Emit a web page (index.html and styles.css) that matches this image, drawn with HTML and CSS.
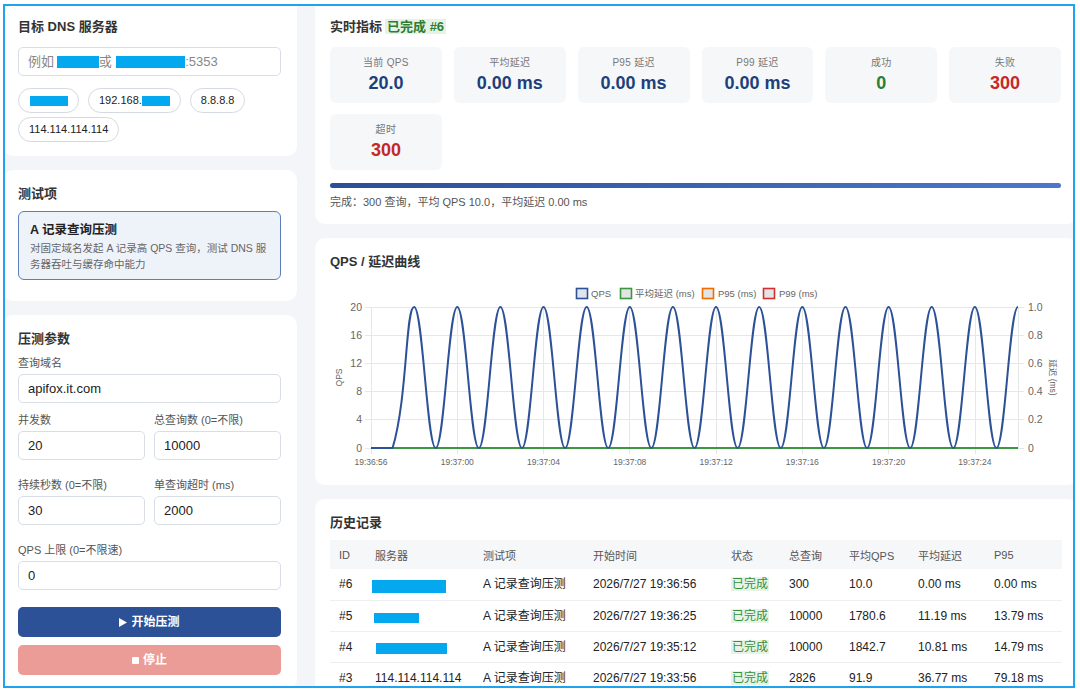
FILE: index.html
```html
<!DOCTYPE html>
<html lang="zh-CN">
<head>
<meta charset="utf-8">
<title>DNS 压测</title>
<link rel="stylesheet" href="styles.css">
</head>
<body>
<div class="frame">
  <div class="page">
    <div class="col">
      <section class="card first">
        <div class="card-title mb12">目标 DNS 服务器</div>
        <div class="input ph">例如 <span class="redact r-ph1"></span>或 <span class="redact r-ph2"></span>:5353</div>
        <div class="chips">
          <span class="chip"><span class="redact r-c1"></span></span>
          <span class="chip">192.168.<span class="redact r-c2"></span></span>
          <span class="chip">8.8.8.8</span>
          <span class="chip">114.114.114.114</span>
        </div>
      </section>

      <section class="card card-tests">
        <div class="card-title">测试项</div>
        <div class="test-item">
          <div class="ti-title">A 记录查询压测</div>
          <div class="ti-desc">对固定域名发起 A 记录高 QPS 查询，测试 DNS 服<br>务器吞吐与缓存命中能力</div>
        </div>
      </section>

      <section class="card">
        <div class="card-title">压测参数</div>
        <div class="field f-first">
          <div class="label">查询域名</div>
          <div class="input">apifox.it.com</div>
        </div>
        <div class="row2 f-gap10">
          <div class="field">
            <div class="label">并发数</div>
            <div class="input">20</div>
          </div>
          <div class="field">
            <div class="label">总查询数 (0=不限)</div>
            <div class="input">10000</div>
          </div>
        </div>
        <div class="row2 f-gap18">
          <div class="field">
            <div class="label">持续秒数 (0=不限)</div>
            <div class="input">30</div>
          </div>
          <div class="field">
            <div class="label">单查询超时 (ms)</div>
            <div class="input">2000</div>
          </div>
        </div>
        <div class="field f-gap18b">
          <div class="label lbl-tight">QPS 上限 (0=不限速)</div>
          <div class="input">0</div>
        </div>
        <div class="btn btn-start"><svg class="ico" width="8" height="9" viewBox="0 0 8 9"><path d="M0 0L8 4.5L0 9Z" fill="#fff"/></svg><span>开始压测</span></div>
        <div class="btn btn-stop"><svg class="ico" width="7" height="7" viewBox="0 0 7 7"><rect x="0" y="0" width="7" height="7" rx="1" fill="#fff"/></svg><span>停止</span></div>
      </section>
    </div>

    <div class="col">
      <section class="card first metrics-card">
        <div class="card-title mb12">实时指标<span class="badge">已完成 #6</span></div>
        <div class="metrics">
          <div class="metric"><div class="m-label">当前 QPS</div><div class="m-value">20.0</div></div>
          <div class="metric"><div class="m-label">平均延迟</div><div class="m-value">0.00 ms</div></div>
          <div class="metric"><div class="m-label">P95 延迟</div><div class="m-value">0.00 ms</div></div>
          <div class="metric"><div class="m-label">P99 延迟</div><div class="m-value">0.00 ms</div></div>
          <div class="metric"><div class="m-label">成功</div><div class="m-value ok">0</div></div>
          <div class="metric"><div class="m-label">失败</div><div class="m-value bad">300</div></div>
          <div class="metric"><div class="m-label">超时</div><div class="m-value bad">300</div></div>
        </div>
        <div class="progress"></div>
        <div class="done-text">完成：300 查询，平均 QPS 10.0，平均延迟 0.00 ms</div>
      </section>

      <section class="card chart-card">
        <div class="card-title">QPS / 延迟曲线</div>
        <svg class="chart" width="732" height="190" viewBox="0 0 732 190">
          <g class="legend">
            <rect x="246.5" y="5.5" width="11" height="10" fill="#dfe5ee" stroke="#2c5197" stroke-width="1.6"/>
            <text x="261" y="14">QPS</text>
            <rect x="290.5" y="5.5" width="11" height="10" fill="#e2e4e6" stroke="#3c963f" stroke-width="1.6"/>
            <text x="305" y="14">平均延迟 (ms)</text>
            <rect x="372.5" y="5.5" width="11" height="10" fill="#e2e4e6" stroke="#ef6c00" stroke-width="1.6"/>
            <text x="388" y="14">P95 (ms)</text>
            <rect x="433.5" y="5.5" width="11" height="10" fill="#e2e4e6" stroke="#d32f2f" stroke-width="1.6"/>
            <text x="449" y="14">P99 (ms)</text>
          </g>
          <g class="grid" stroke="#e6e7e9" stroke-width="1">
            <line x1="35" y1="24.5" x2="694" y2="24.5"/>
            <line x1="35" y1="52.5" x2="694" y2="52.5"/>
            <line x1="35" y1="80.5" x2="694" y2="80.5"/>
            <line x1="35" y1="108.5" x2="694" y2="108.5"/>
            <line x1="35" y1="136.5" x2="694" y2="136.5"/>
            <line x1="35" y1="165.5" x2="694" y2="165.5"/>
            <line x1="41.5" y1="24" x2="41.5" y2="171"/>
            <line x1="127.5" y1="24" x2="127.5" y2="171"/>
            <line x1="213.5" y1="24" x2="213.5" y2="171"/>
            <line x1="299.5" y1="24" x2="299.5" y2="171"/>
            <line x1="386.5" y1="24" x2="386.5" y2="171"/>
            <line x1="472.5" y1="24" x2="472.5" y2="171"/>
            <line x1="558.5" y1="24" x2="558.5" y2="171"/>
            <line x1="645.5" y1="24" x2="645.5" y2="171"/>
            <line x1="688.5" y1="24" x2="688.5" y2="166"/>
          </g>
          <g class="ylab">
            <text x="32" y="28">20</text>
            <text x="32" y="56">16</text>
            <text x="32" y="84">12</text>
            <text x="32" y="112">8</text>
            <text x="32" y="140">4</text>
            <text x="32" y="169">0</text>
          </g>
          <g class="ylab-r">
            <text x="698" y="28">1.0</text>
            <text x="698" y="56">0.8</text>
            <text x="698" y="84">0.6</text>
            <text x="698" y="112">0.4</text>
            <text x="698" y="140">0.2</text>
            <text x="698" y="169">0</text>
          </g>
          <text class="axis-title" transform="translate(12 94.5) rotate(-90)">QPS</text>
          <text class="axis-title" transform="translate(720 94.5) rotate(90)">延迟 (ms)</text>
          <g class="xlab">
            <text x="41" y="182">19:36:56</text>
            <text x="127.3" y="182">19:37:00</text>
            <text x="213.5" y="182">19:37:04</text>
            <text x="299.8" y="182">19:37:08</text>
            <text x="386.1" y="182">19:37:12</text>
            <text x="472.3" y="182">19:37:16</text>
            <text x="558.6" y="182">19:37:20</text>
            <text x="644.9" y="182">19:37:24</text>
          </g>
          <line x1="41" y1="165" x2="688" y2="165" stroke="#d32f2f" stroke-width="2"/>
          <line x1="41" y1="165" x2="688" y2="165" stroke="#ef6c00" stroke-width="2"/>
          <line x1="41" y1="165" x2="688" y2="165" stroke="#3c963f" stroke-width="2"/>
          <path fill="none" stroke="#2c5197" stroke-width="2" stroke-linejoin="round" d="M41,165 C49.63,165 60.31,165 62.57,165 C77.56,116 75.5,24 84.13,24 C92.76,24 97.07,165 105.70,165 C114.33,165 118.64,24 127.27,24 C135.90,24 140.20,165 148.83,165 C157.46,165 161.77,24 170.40,24 C179.03,24 183.34,165 191.97,165 C200.60,165 204.90,24 213.53,24 C222.16,24 226.47,165 235.10,165 C243.73,165 248.04,24 256.67,24 C265.30,24 269.60,165 278.23,165 C286.86,165 291.17,24 299.80,24 C308.43,24 312.74,165 321.37,165 C330.00,165 334.30,24 342.93,24 C351.56,24 355.87,165 364.50,165 C373.13,165 377.44,24 386.07,24 C394.70,24 399.00,165 407.63,165 C416.26,165 420.57,24 429.20,24 C437.83,24 442.14,165 450.77,165 C459.40,165 463.70,24 472.33,24 C480.96,24 485.27,165 493.90,165 C502.53,165 506.84,24 515.47,24 C524.10,24 528.40,165 537.03,165 C545.66,165 549.97,24 558.60,24 C567.23,24 571.54,165 580.17,165 C588.80,165 593.10,24 601.73,24 C610.36,24 614.67,165 623.30,165 C631.93,165 636.24,24 644.87,24 C653.50,24 657.80,165 666.43,165 C675.06,165 679.37,24 688.00,24"/>
        </svg>
      </section>

      <section class="card">
        <div class="card-title">历史记录</div>
        <table class="hist">
          <colgroup>
            <col class="w-id"><col class="w-srv"><col class="w-test"><col class="w-time"><col class="w-st"><col class="w-tot"><col class="w-qps"><col class="w-avg"><col class="w-p95">
          </colgroup>
          <thead>
            <tr><th>ID</th><th>服务器</th><th>测试项</th><th>开始时间</th><th>状态</th><th>总查询</th><th>平均QPS</th><th>平均延迟</th><th>P95</th></tr>
          </thead>
          <tbody>
            <tr><td>#6</td><td><span class="redact r-h1"></span></td><td>A 记录查询压测</td><td>2026/7/27 19:36:56</td><td><span class="st">已完成</span></td><td>300</td><td>10.0</td><td>0.00 ms</td><td>0.00 ms</td></tr>
            <tr><td>#5</td><td><span class="redact r-h2"></span></td><td>A 记录查询压测</td><td>2026/7/27 19:36:25</td><td><span class="st">已完成</span></td><td>10000</td><td>1780.6</td><td>11.19 ms</td><td>13.79 ms</td></tr>
            <tr><td>#4</td><td><span class="redact r-h3"></span></td><td>A 记录查询压测</td><td>2026/7/27 19:35:12</td><td><span class="st">已完成</span></td><td>10000</td><td>1842.7</td><td>10.81 ms</td><td>14.79 ms</td></tr>
            <tr><td>#3</td><td>114.114.114.114</td><td>A 记录查询压测</td><td>2026/7/27 19:33:56</td><td><span class="st">已完成</span></td><td>2826</td><td>91.9</td><td>36.77 ms</td><td>79.18 ms</td></tr>
          </tbody>
        </table>
      </section>
    </div>
  </div>
</div>
</body>
</html>
```

FILE: styles.css
```css
* { box-sizing: border-box; }

body {
  margin: 0;
  background: #ffffff;
  font-family: "Liberation Sans", "Noto Sans CJK SC", sans-serif;
  color: #222;
}

.frame {
  margin: 4px 0 0 3px;
  width: 1072px;
  height: 684px;
  border: 2px solid #1fa3ee;
  background: #f3f5f8;
  overflow: hidden;
}

.page {
  display: grid;
  grid-template-columns: 294px 762px;
  column-gap: 18px;
  align-items: start;
  margin: -8px 0 0 -2px;
}

.col {
  display: flex;
  flex-direction: column;
  gap: 14px;
}

.card {
  background: #fff;
  border-radius: 10px;
  padding: 15px 16px 14px 15px;
}

.card.first { padding-top: 20px; }

.card-title {
  font-size: 13px;
  font-weight: bold;
  line-height: 17px;
  color: #333;
  white-space: nowrap;
}

.mb12 { margin-bottom: 12px; }

/* inputs */
.input {
  height: 29px;
  border: 1px solid #d9dee6;
  border-radius: 5px;
  padding: 0 9px;
  font-size: 13px;
  line-height: 27px;
  background: #fff;
  color: #222;
  white-space: nowrap;
  overflow: hidden;
}

.input.ph { color: #888; }

.redact {
  display: inline-block;
  background: #03a8ee;
  vertical-align: middle;
}

.r-ph1 { width: 42px; height: 12px; margin-top: -2px; margin-left: -1px; }
.r-ph2 { width: 69px; height: 12px; margin-top: -2px; margin-left: 1px; }
.r-c1 { width: 38px; height: 10px; margin-left: 1px; }
.r-c2 { width: 28px; height: 10px; }
.r-h1 { width: 74px; height: 13px; margin-left: -3px; margin-top: 3px; }
.r-h2 { width: 45px; height: 10px; margin-left: -1px; margin-top: 3px; }
.r-h3 { width: 71px; height: 11px; margin-left: 1px; margin-top: 3px; }

.chips {
  display: flex;
  flex-wrap: wrap;
  gap: 4px 9px;
  margin-top: 12px;
}

.chip {
  display: flex;
  align-items: center;
  height: 25px;
  border: 1px solid #d5dae2;
  border-radius: 13px;
  padding: 0 10px;
  font-size: 11px;
  line-height: 23px;
  color: #222;
  background: #fff;
  white-space: nowrap;
}

/* test item */
.card-tests { padding-bottom: 21px; }

.test-item {
  margin-top: 9px;
  border: 1px solid #5d7ebd;
  border-radius: 6px;
  background: #eef2f9;
  padding: 9px 11px 7px;
}

.ti-title {
  font-size: 12.5px;
  font-weight: bold;
  line-height: 18px;
  color: #222;
}

.ti-desc {
  margin-top: 1px;
  font-size: 10.5px;
  line-height: 16px;
  color: #666;
  white-space: nowrap;
}

/* params */
.field { display: flex; flex-direction: column; }

.label {
  font-size: 11px;
  line-height: 14px;
  color: #555;
  margin-bottom: 4px;
  white-space: nowrap;
}

.lbl-tight { margin-bottom: 4px; }

.f-first { margin-top: 9px; }

.row2 {
  display: grid;
  grid-template-columns: 1fr 1fr;
  column-gap: 9px;
}

.f-gap10 { margin-top: 10px; }
.f-gap18 { margin-top: 18px; }
.f-gap18b { margin-top: 18px; }

.btn {
  height: 30px;
  border-radius: 5px;
  color: #fff;
  font-size: 12px;
  font-weight: bold;
  line-height: 30px;
  display: flex;
  align-items: center;
  justify-content: center;
  gap: 4px;
}

.btn-start { background: #2c5197; margin-top: 17px; }
.btn-stop { background: #eb9c97; margin-top: 8px; }
.ico { display: block; }

/* metrics */
.badge {
  margin-left: 3px;
  padding: 0 2px;
  background: #e5f3e7;
  color: #2e7d32;
}

.metrics {
  display: grid;
  grid-template-columns: repeat(6, 1fr);
  gap: 11px 12px;
}

.metric {
  height: 56px;
  background: #f6f7f9;
  border-radius: 6px;
  padding-top: 9px;
  text-align: center;
}

.m-label {
  font-size: 10px;
  line-height: 14px;
  color: #777;
  letter-spacing: 0.3px;
}

.m-value {
  margin-top: 2px;
  font-size: 18px;
  line-height: 22px;
  font-weight: bold;
  color: #203f79;
}

.m-value.ok { color: #2e7d32; }
.m-value.bad { color: #c62828; }

.progress {
  margin-top: 13px;
  height: 5px;
  border-radius: 3px;
  background: linear-gradient(90deg, #2a4f96, #4b78c9);
}

.done-text {
  margin-top: 6px;
  font-size: 11px;
  line-height: 16px;
  color: #555;
}

/* chart */
.chart-card { padding-bottom: 12px; }

.chart {
  display: block;
  margin-top: 13px;
  font-family: "Liberation Sans", "Noto Sans CJK SC", sans-serif;
}

.legend text { font-size: 9.5px; fill: #666; }
.ylab text { font-size: 10.5px; fill: #666; text-anchor: end; }
.ylab-r text { font-size: 10.5px; fill: #666; text-anchor: start; }
.xlab text { font-size: 8.5px; fill: #666; text-anchor: middle; }
.axis-title { font-size: 8.5px; fill: #666; text-anchor: middle; }

/* history */
.hist {
  margin-top: 9px;
  width: 732px;
  border-collapse: collapse;
  table-layout: fixed;
}

.w-id { width: 36px; }
.w-srv { width: 108px; }
.w-test { width: 110px; }
.w-time { width: 138px; }
.w-st { width: 58px; }
.w-tot { width: 60px; }
.w-qps { width: 69px; }
.w-avg { width: 76px; }
.w-p95 { width: 77px; }

.hist th {
  height: 29px;
  background: #f6f7f9;
  font-size: 11px;
  font-weight: normal;
  color: #555;
  text-align: left;
  padding: 0 0 0 9px;
  white-space: nowrap;
}

.hist td {
  height: 31px;
  border-bottom: 1px solid #eceef2;
  font-size: 12px;
  line-height: 16px;
  padding: 0 0 0 9px;
  color: #222;
  white-space: nowrap;
  overflow: hidden;
}

.st {
  background: #e6f4e8;
  color: #388e3c;
  padding: 0 1px;
}
```
